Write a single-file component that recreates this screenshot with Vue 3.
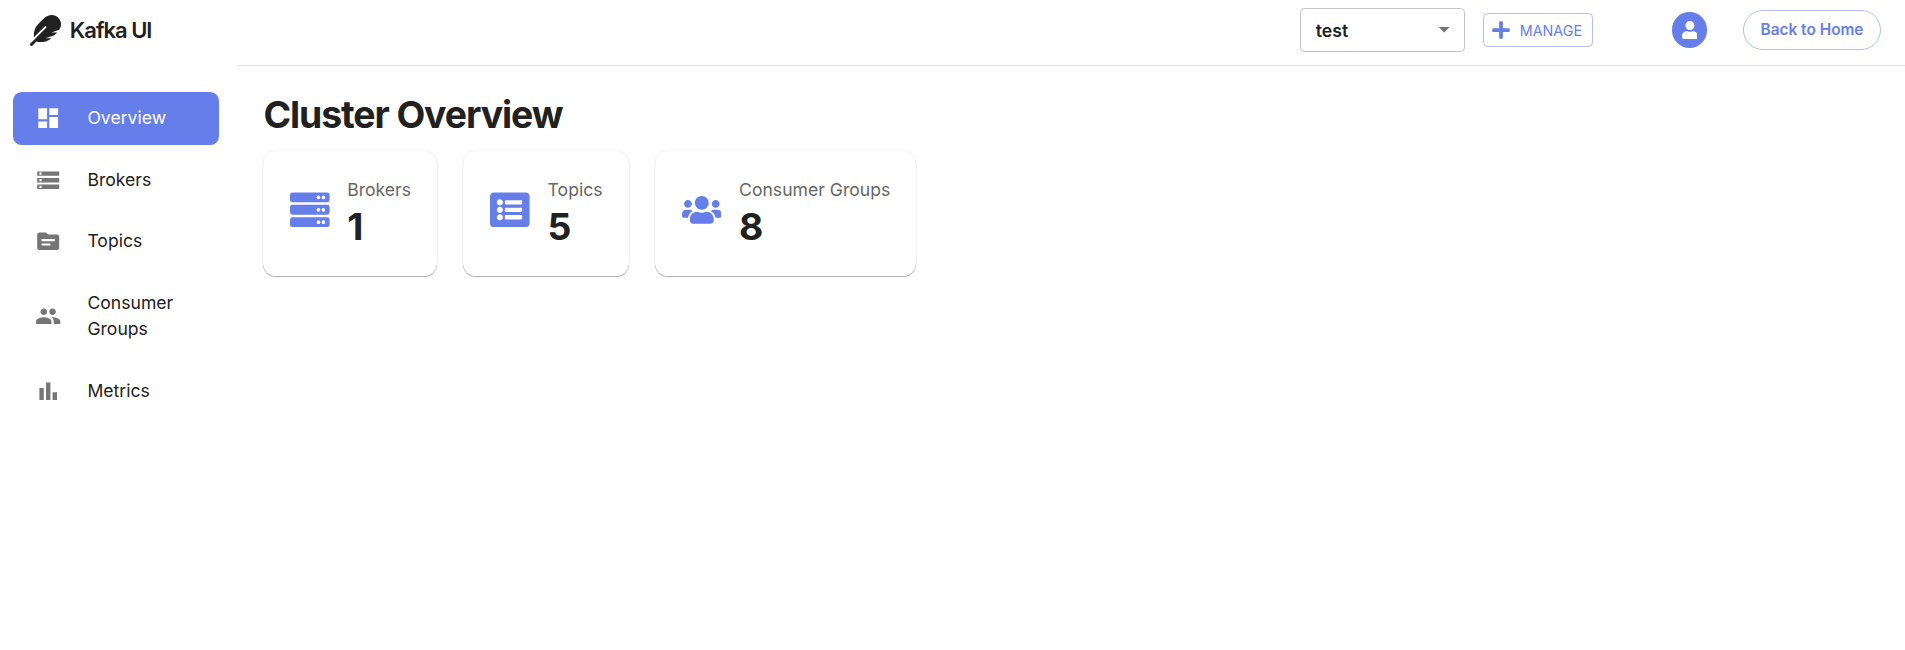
<script setup>
const nav = [
  { label: 'Overview', active: true, d: 'M3 13h8V3H3v10zm0 8h8v-6H3v6zm10 0h8V11h-8v10zm0-18v6h8V3h-8z' },
  { label: 'Brokers', d: 'M2 20h20v-4H2v4zm2-3h2v2H4v-2zM2 4v4h20V4H2zm4 3H4V5h2v2zm-4 7h20v-4H2v4zm2-3h2v2H4v-2z' },
  { label: 'Topics', d: 'M20 6h-8l-2-2H4c-1.1 0-1.99.9-1.99 2L2 18c0 1.1.9 2 2 2h16c1.1 0 2-.9 2-2V8c0-1.1-.9-2-2-2zm-6 10H6v-2h8v2zm4-4H6v-2h12v2z' },
  { label: 'Consumer Groups', d: 'M16 11c1.66 0 2.99-1.34 2.99-3S17.66 5 16 5c-1.66 0-3 1.34-3 3s1.34 3 3 3zm-8 0c1.66 0 2.99-1.34 2.99-3S9.66 5 8 5C6.34 5 5 6.34 5 8s1.34 3 3 3zm0 2c-2.33 0-7 1.17-7 3.5V19h14v-2.5c0-2.33-4.67-3.5-7-3.5zm8 0c-.29 0-.62.02-.97.05 1.16.84 1.97 1.97 1.97 3.45V19h6v-2.5c0-2.33-4.67-3.5-7-3.5z' },
  { label: 'Metrics', d: 'M4 9h4v11H4zm12 4h4v7h-4zm-6-9h4v16h-4z' },
]
const server = [0, 160, 320]
  .map((y) => `M32 ${32 + y}h448a32 32 0 0 1 32 32v64a32 32 0 0 1-32 32H32a32 32 0 0 1-32-32V${64 + y}a32 32 0 0 1 32-32zM432 ${72 + y}a24 24 0 1 0 0 48 24 24 0 0 0 0-48zM368 ${72 + y}a24 24 0 1 0 0 48 24 24 0 0 0 0-48z`)
  .join('')
const list = 'M464 480H48c-26.51 0-48-21.49-48-48V80c0-26.51 21.49-48 48-48h416c26.51 0 48 21.49 48 48v352c0 26.51-21.49 48-48 48zM128 120c-22.091 0-40 17.909-40 40s17.909 40 40 40 40-17.909 40-40-17.909-40-40-40zm0 96c-22.091 0-40 17.909-40 40s17.909 40 40 40 40-17.909 40-40-17.909-40-40-40zm0 96c-22.091 0-40 17.909-40 40s17.909 40 40 40 40-17.909 40-40-17.909-40-40-40zm288-136v-32c0-6.627-5.373-12-12-12H204c-6.627 0-12 5.373-12 12v32c0 6.627 5.373 12 12 12h200c6.627 0 12-5.373 12-12zm0 96v-32c0-6.627-5.373-12-12-12H204c-6.627 0-12 5.373-12 12v32c0 6.627 5.373 12 12 12h200c6.627 0 12-5.373 12-12zm0 96v-32c0-6.627-5.373-12-12-12H204c-6.627 0-12 5.373-12 12v32c0 6.627 5.373 12 12 12h200c6.627 0 12-5.373 12-12z'
const users = 'M96 224c35.3 0 64-28.7 64-64s-28.7-64-64-64-64 28.7-64 64 28.7 64 64 64zm448 0c35.3 0 64-28.7 64-64s-28.7-64-64-64-64 28.7-64 64 28.7 64 64 64zm32 32h-64c-17.6 0-33.5 7.1-45.1 18.6 40.3 22.1 68.9 62 75.1 109.4h66c17.7 0 32-14.3 32-32v-32c0-35.3-28.7-64-64-64zm-256 0c61.9 0 112-50.1 112-112S381.9 32 320 32 208 82.1 208 144s50.1 112 112 112zm76.8 32h-8.3c-20.8 10-43.9 16-68.5 16s-47.6-6-68.5-16h-8.3C179.6 288 128 339.6 128 403.2V432c0 26.5 21.5 48 48 48h288c26.5 0 48-21.5 48-48v-28.8c0-63.6-51.6-115.2-115.2-115.2zm-223.7-13.4C161.5 263.1 145.6 256 128 256H64c-35.3 0-64 28.7-64 64v32c0 17.7 14.3 32 32 32h65.9c6.3-47.4 34.9-87.3 75.2-109.4z'
const cards = [
  { label: 'Brokers', value: 1, box: '0 0 512 512', d: server },
  { label: 'Topics', value: 5, box: '0 0 512 512', d: list },
  { label: 'Consumer Groups', value: 8, box: '0 0 640 512', d: users },
]
</script>

<template>
  <div class="app">
    <aside class="sidebar">
      <div class="brand">
        <svg class="feather" viewBox="0 0 512 512"><path d="M467.14 44.84c-62.55-62.48-161.67-64.78-252.28 25.73-78.61 78.52-60.98 60.92-85.75 85.66-60.46 60.39-70.39 150.83-63.64 211.17l178.44-178.25c6.26-6.25 16.4-6.25 22.65 0s6.25 16.38 0 22.63L7.04 471.03c-9.38 9.37-9.38 24.57 0 33.94 9.38 9.37 24.6 9.37 33.98 0l66.1-66.03C159.42 454.65 279 457.11 353.95 384h-98.19l147.57-49.14c49.99-49.93 36.38-36.18 46.31-46.86h-97.78l131.54-43.8c45.44-74.46 34.31-148.84-16.26-199.36z" /></svg>
        <span class="brand-name">Kafka UI</span>
      </div>
      <nav class="nav">
        <a v-for="n in nav" :key="n.label" class="nav-item" :class="{ active: n.active }">
          <svg class="nav-icon" viewBox="0 0 24 24"><path fill-rule="evenodd" :d="n.d" /></svg>
          <span class="nav-label">{{ n.label }}</span>
        </a>
      </nav>
    </aside>
    <div class="content">
      <header class="topbar">
        <div class="select">
          <span>test</span>
          <svg class="caret" viewBox="0 0 24 24"><path d="M7 10l5 5 5-5z" /></svg>
        </div>
        <button class="manage">
          <svg class="plus" viewBox="0 0 448 512"><path d="M416 208H272V64c0-17.67-14.33-32-32-32h-32c-17.67 0-32 14.33-32 32v144H32c-17.67 0-32 14.33-32 32v32c0 17.67 14.33 32 32 32h144v144c0 17.67 14.33 32 32 32h32c17.67 0 32-14.33 32-32V304h144c17.67 0 32-14.33 32-32v-32c0-17.67-14.33-32-32-32z" /></svg>
          <span>MANAGE</span>
        </button>
        <div class="avatar">
          <svg class="user" viewBox="0 0 448 512"><path d="M224 256c70.7 0 128-57.3 128-128S294.7 0 224 0 96 57.3 96 128s57.3 128 128 128zm89.6 32h-16.7c-22.2 10.2-46.9 16-72.9 16s-50.6-5.8-72.9-16h-16.7C60.2 288 0 348.2 0 422.4V464c0 26.5 21.5 48 48 48h352c26.5 0 48-21.5 48-48v-41.6c0-74.2-60.2-134.4-134.4-134.4z" /></svg>
        </div>
        <button class="home">Back to Home</button>
      </header>
      <main class="main">
        <h1 class="title">Cluster Overview</h1>
        <section class="cards">
          <article v-for="c in cards" :key="c.label" class="card">
            <svg class="card-icon" :viewBox="c.box"><path fill-rule="evenodd" :d="c.d" /></svg>
            <div class="card-text">
              <div class="card-label">{{ c.label }}</div>
              <div class="card-value">{{ c.value }}</div>
            </div>
          </article>
        </section>
      </main>
    </div>
  </div>
</template>

<style>
body {
  background: #fff;
}
</style>

<style scoped>
.app {
  display: flex;
  height: 650px;
  overflow: hidden;
  font-family: Inter, "Liberation Sans", sans-serif;
  font-size: 17.6px;
  line-height: 26.4px;
  color: #212121;
  background: #fff;
}
.app * {
  box-sizing: border-box;
}
svg {
  display: block;
  flex: none;
  fill: currentColor;
}
.sidebar {
  width: 237px;
  flex: none;
}
.brand {
  display: flex;
  align-items: center;
  gap: 8.8px;
  height: 60px;
  padding-left: 30px;
}
.feather {
  width: 31px;
  height: 31px;
}
.brand-name {
  font-size: 22px;
  font-weight: 600;
  letter-spacing: -1px;
}
.nav {
  display: flex;
  flex-direction: column;
  gap: 8.8px;
  padding: 31.8px 18px 0 13px;
}
.nav-item {
  display: flex;
  align-items: center;
  padding: 13.2px 22px;
  border-radius: 8.8px;
}
.nav-icon {
  width: 26.4px;
  height: 26.4px;
  margin-right: 26px;
  color: #757575;
}
.active,
.active .nav-icon {
  color: #fff;
}
.active {
  background: #667eea;
}
.content {
  flex: 1;
}
.topbar {
  display: flex;
  align-items: center;
  justify-content: flex-end;
  height: 66px;
  padding: 0 24px 5px 0;
  border-bottom: 1px solid #e0e0e0;
}
.select {
  display: flex;
  align-items: center;
  justify-content: space-between;
  width: 165px;
  height: 44px;
  padding: 2px 6px 0 15px;
  border: 1px solid #c4c4c4;
  border-radius: 4.4px;
  font-weight: 600;
}
.caret {
  width: 26.4px;
  height: 26.4px;
  margin-top: -3px;
  color: #757575;
}
button {
  background: none;
  font-family: inherit;
  color: #667eea;
}
.manage {
  display: flex;
  align-items: center;
  gap: 10px;
  width: 110px;
  height: 34px;
  margin-left: 18px;
  padding: 1px 0 0 8px;
  border: 1px solid #b3bff5;
  border-radius: 4.4px;
  font-size: 14.3px;
}
.plus {
  width: 18px;
  height: 20px;
  margin-top: -1px;
}
.avatar {
  display: flex;
  align-items: center;
  justify-content: center;
  width: 35.2px;
  height: 35.2px;
  margin-left: 79px;
  border-radius: 50%;
  background: #667eea;
  color: #fff;
}
.user {
  width: 15.8px;
  height: 18px;
}
.home {
  width: 138px;
  height: 40px;
  margin-left: 36px;
  padding: 0 0 1px;
  border: 1px solid #b3bff5;
  border-radius: 20px;
  font-size: 15.4px;
  font-weight: 600;
}
.main {
  padding: 26px;
}
.title {
  margin: 0 0 13px 0.5px;
  font-size: 37.4px;
  line-height: 46px;
  font-weight: 700;
  letter-spacing: -1.1px;
}
.cards {
  display: flex;
  gap: 26.4px;
}
.card {
  display: flex;
  align-items: center;
  gap: 17.6px;
  height: 125px;
  padding: 0 26px 7px 27px;
  border-radius: 13.2px;
  box-shadow: 0 1px 1px rgba(0, 0, 0, 0.32), 0 0 2px rgba(0, 0, 0, 0.1);
}
.card-icon {
  width: 39.6px;
  height: 39.6px;
  color: #667eea;
}
.card-text {
  padding-top: 7px;
}
.card-label {
  color: #666;
}
.card-value {
  font-size: 37.4px;
  line-height: 47px;
  font-weight: 700;
}
</style>
